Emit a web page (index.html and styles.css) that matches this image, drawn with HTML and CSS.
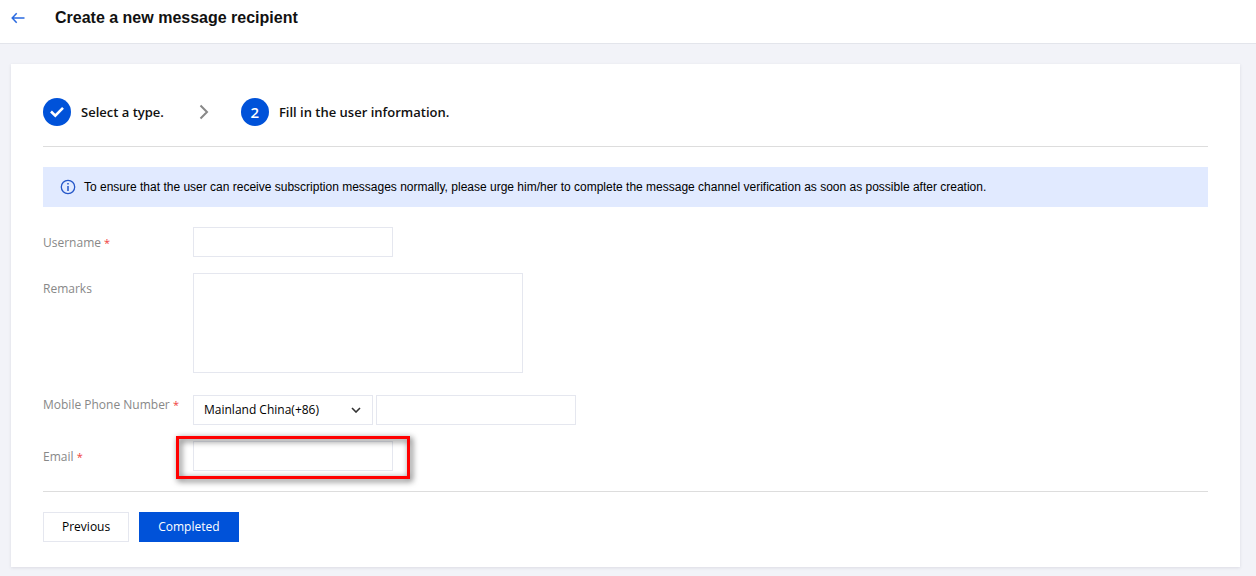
FILE: index.html
```
<!DOCTYPE html>
<html lang="en">
    <head>
        <meta charset="utf-8">
        <meta name="viewport" content="width=device-width, initial-scale=1">
        <title>Create a new message recipient</title>

        <link rel="stylesheet" href="styles.css">
    </head>
    <body>
        <header class="header">
            <a class="back" href="#" aria-label="Back">
                <svg width="14" height="12" viewBox="0 0 14 12" fill="none" stroke="currentColor" stroke-width="1.5">
                    <path d="M5.7 1.2L1.2 6l4.5 4.8M1.2 6H13.5"/>
                </svg>
            </a>
            <h1>Create a new message recipient</h1>
        </header>

        <main class="card">
            <ol class="steps">
                <li class="step">
                    <span class="step-num">
                        <svg width="16" height="12" viewBox="0 0 16 12" fill="none" stroke="currentColor" stroke-width="2.6">
                            <path d="M2 5.5l4.3 4.2L14 1.8"/>
                        </svg>
                    </span>
                    <span>Select a type.</span>
                    <svg class="step-arrow" width="10" height="16" viewBox="0 0 10 16" fill="none" stroke="currentColor" stroke-width="2">
                        <path d="M1.5 1.5L8 8l-6.5 6.5"/>
                    </svg>
                </li>
                <li class="step">
                    <span class="step-num">2</span>
                    <span>Fill in the user information.</span>
                </li>
            </ol>

            <div class="notice">
                <svg width="16" height="16" viewBox="0 0 16 16" fill="none" stroke="currentColor">
                    <circle cx="8" cy="8" r="6.7" stroke-width="1.3"/>
                    <path d="M8 4v1.6M8 7v5" stroke-width="1.5"/>
                </svg>
                <span>To ensure that the user can receive subscription messages normally, please urge him/her to complete the message channel verification as soon as possible after creation.</span>
            </div>

            <form>
                <div class="row">
                    <label for="username">Username <span class="required">*</span></label>
                    <input class="field" id="username" type="text">
                </div>
                <div class="row">
                    <label for="remarks">Remarks</label>
                    <textarea class="field remarks" id="remarks"></textarea>
                </div>
                <div class="row">
                    <label for="phone">Mobile Phone Number <span class="required">*</span></label>
                    <div class="phone-fields">
                        <div class="select">
                            <select class="field" aria-label="Country code">
                                <option>Mainland China(+86)</option>
                            </select>
                            <svg width="10" height="6" viewBox="0 0 10 6" fill="none" stroke="currentColor" stroke-width="1.6">
                                <path d="M1 1l4 4 4-4"/>
                            </svg>
                        </div>
                        <input class="field" id="phone" type="tel">
                    </div>
                </div>
                <div class="row">
                    <label for="email">Email <span class="required">*</span></label>
                    <div class="highlight">
                        <input class="field" id="email" type="email">
                    </div>
                </div>

                <div class="actions">
                    <button class="btn" type="button">Previous</button>
                    <button class="btn primary" type="submit">Completed</button>
                </div>
            </form>
        </main>
    </body>
</html>
```

FILE: styles.css
```
* {
    box-sizing: border-box;
}

body {
    margin: 0;
    background-color: #f2f3f8;
    color: #000;
    font: 12px/18px "Open Sans", sans-serif;
}

.header {
    display: flex;
    align-items: center;
    gap: 30px;
    padding: 9px 11px 16px;
    background-color: #fff;
    border-bottom: 1px solid #e3e5eb;
}

.back {
    display: flex;
    color: #2a6ae0;
}

h1 {
    margin: 0;
    color: #111;
    font: bold 16px/18px "Liberation Sans", Arial, sans-serif;
}

.card {
    margin: 20px 16px 9px 11px;
    padding: 34px 32px 25px;
    background-color: #fff;
    box-shadow: 0 1px 3px rgba(54, 58, 80, 0.12);
}

.steps {
    display: flex;
    margin: 0 0 20px;
    padding: 0 0 20px;
    border-bottom: 1px solid #ddd;
    color: #111;
    list-style: none;
    font-size: 13px;
    font-weight: 600;
}

.step {
    display: flex;
    align-items: center;
    gap: 10px;
}

.step-num {
    display: flex;
    align-items: center;
    justify-content: center;
    width: 28px;
    height: 28px;
    border-radius: 50%;
    background-color: #0052d9;
    color: #fff;
    font-size: 15px;
}

.step-arrow {
    margin: 0 32px 0 25px;
    color: #888;
}

.notice {
    display: flex;
    align-items: center;
    gap: 8px;
    margin-bottom: 20px;
    padding: 11px 17px;
    background-color: #e1eaff;
    font-family: "Liberation Sans", Arial, sans-serif;
}

.notice svg {
    flex: none;
    color: #2456c8;
}

.row {
    display: flex;
    align-items: flex-start;
    margin-bottom: 16px;
}

.row label {
    flex: none;
    width: 150px;
    margin-bottom: -2px;
    color: #888;
    line-height: 32px;
}

.required {
    color: #f04040;
    font-size: 11px;
}

.field {
    display: block;
    width: 200px;
    height: 30px;
    margin: 0;
    padding: 0 10px;
    border: 1px solid #e5e7ef;
    border-radius: 0;
    background-color: #fff;
    color: #000;
    font: inherit;
}

.remarks {
    width: 330px;
    height: 100px;
    padding: 6px 10px;
    resize: none;
}

.phone-fields {
    display: flex;
    gap: 3px;
    padding-top: 6px;
}

.select {
    position: relative;
}

.select .field {
    width: 180px;
    appearance: none;
}

.select svg {
    position: absolute;
    top: 12px;
    right: 12px;
    color: #333;
    pointer-events: none;
}

.highlight {
    position: relative;
}

/* callout frame over the email field */
.highlight::after {
    content: "";
    position: absolute;
    inset: -5px -17px -8px;
    border: 3px solid #f00;
    filter: drop-shadow(2px 2px 3px rgba(0, 0, 0, 0.7));
    pointer-events: none;
}

.actions {
    display: flex;
    gap: 10px;
    margin-top: 20px;
    padding-top: 20px;
    border-top: 1px solid #ddd;
}

.btn {
    height: 30px;
    padding: 0 18px;
    border: 1px solid #e5e7ef;
    background-color: #fff;
    color: #000;
    font: inherit;
}

.primary {
    border-color: #0052d9;
    background-color: #0052d9;
    color: #fff;
}
```
